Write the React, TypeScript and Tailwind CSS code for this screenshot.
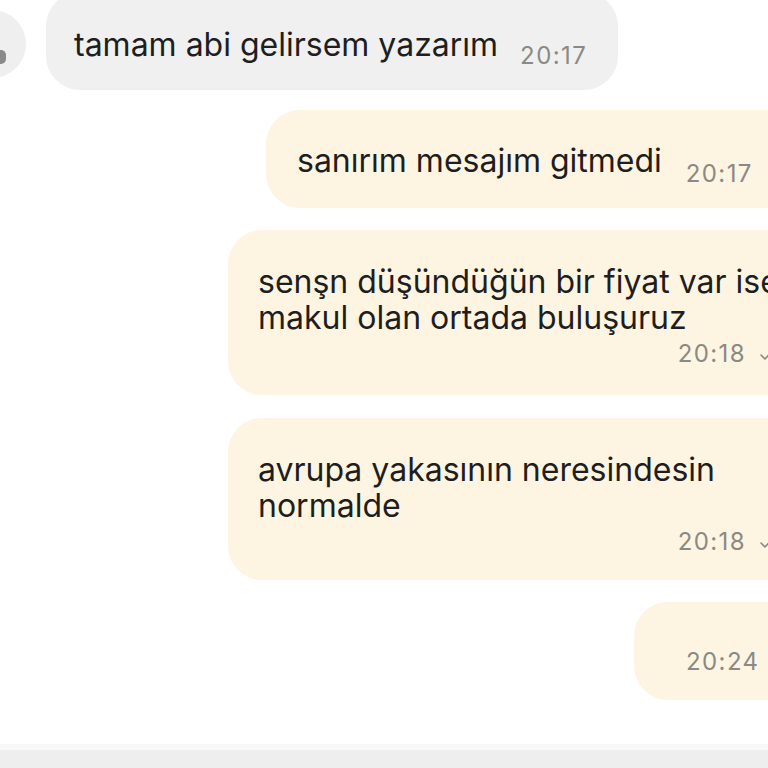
import { ReactNode } from "react";

const font = { fontFamily: "Inter, 'Noto Sans', 'Liberation Sans', sans-serif" };

const Check = () => (
  <svg width="16" height="14" viewBox="0 0 16 14" className="shrink-0">
    <polyline points="1,8 5,12 15,1" fill="none" stroke="#8b8985" strokeWidth="1.6" strokeLinecap="round" strokeLinejoin="round" />
  </svg>
);

const Time = ({ children }: { children: ReactNode }) => (
  <span className="text-[24px] leading-[28px] text-[#8b8985] tracking-[1.4px]">{children}</span>
);

const OwnBlock = ({ lines, time, className }: { lines: string[]; time: string; className: string }) => (
  <div className={`bg-[#fdf5e2] rounded-[34px] shrink-0 pl-[30px] pr-[24px] pt-[34px] pb-[27px] ${className}`}>
    <div className="text-[32px] leading-[36px] text-[#1e1e1e] whitespace-nowrap">
      {lines.map((l) => (
        <div key={l}>{l}</div>
      ))}
    </div>
    <div className="flex items-center justify-end gap-[14px] mt-[4px]">
      <Time>{time}</Time>
      <Check />
    </div>
  </div>
);

export default function App() {
  return (
    <div className="w-[768px] h-[768px] overflow-hidden bg-white flex flex-col" style={font}>
      <div className="flex-1 flex flex-col">
        {/* incoming */}
        <div className="flex items-start mt-[-8px]">
          <div className="w-[68px] h-[68px] rounded-full bg-[#efefef] ml-[-42px] mt-[18px] shrink-0 relative overflow-hidden">
            <div className="absolute left-[38px] top-[40px] w-[10px] h-[14px] rounded-full bg-[#8a8a8a]" />
          </div>
          <div className="ml-[20px] h-[98px] w-[572px] bg-[#f0f0f0] rounded-[34px] flex items-center pl-[28px] pr-[28px] pt-[8px]">
            <span className="text-[32px] leading-[36px] text-[#1e1e1e] whitespace-nowrap">tamam abi gelirsem yazarım</span>
            <span className="ml-[22px] mt-[22px]">
              <Time>20:17</Time>
            </span>
          </div>
        </div>

        {/* outgoing */}
        <div className="flex mt-[20px]">
          <div className="ml-[266px] h-[98px] w-[540px] shrink-0 bg-[#fdf5e2] rounded-[34px] flex items-center pl-[31px] pt-[4px]">
            <span className="text-[32px] leading-[36px] text-[#1e1e1e] whitespace-nowrap">sanırım mesajım gitmedi</span>
            <span className="ml-[24px] mt-[26px]">
              <Time>20:17</Time>
            </span>
          </div>
        </div>

        <div className="flex mt-[22px]">
          <OwnBlock
            className="ml-[228px] w-[572px]"
            lines={["senşn düşündüğün bir fiyat var ise", "makul olan ortada buluşuruz"]}
            time="20:18"
          />
        </div>

        <div className="flex mt-[23px]">
          <OwnBlock
            className="ml-[228px] w-[572px] !pb-[24px]"
            lines={["avrupa yakasının neresindesin", "normalde"]}
            time="20:18"
          />
        </div>

        <div className="flex mt-[22px]">
          <div className="ml-[634px] w-[180px] h-[98px] shrink-0 bg-[#fdf5e2] rounded-[34px] flex items-center pl-[52px] pt-[22px]">
            <Time>20:24</Time>
            <span className="ml-[16px]">
              <Check />
            </span>
          </div>
        </div>
      </div>

      <div className="h-[6px] bg-[#f8f8f8]" />
      <div className="h-[18px] bg-[#eeeeee]" />
    </div>
  );
}
